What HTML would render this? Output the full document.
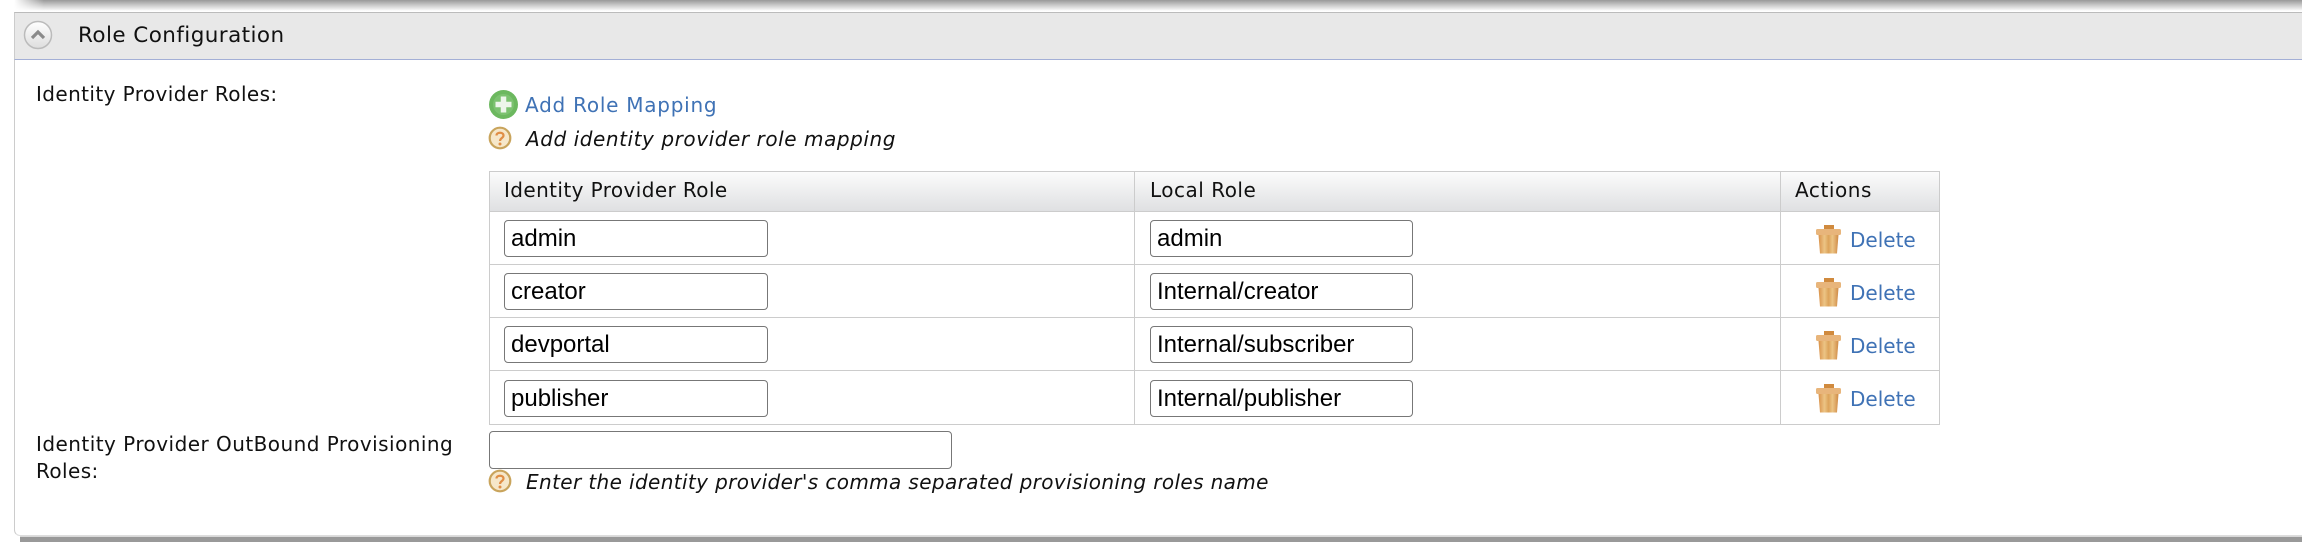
<!DOCTYPE html>
<html><head><meta charset="utf-8"><style>
html,body{margin:0;padding:0;width:2302px;height:542px;overflow:hidden;background:#fff}
.a{position:absolute;white-space:nowrap}
.t{font-family:"DejaVu Sans",sans-serif;font-size:20px;line-height:24px;color:#111;letter-spacing:.4px}
.l{color:#3f72b5;letter-spacing:.75px}
.d{letter-spacing:0}
.i{font-style:italic}
.inp{position:absolute;box-sizing:border-box;width:264px;height:37px;border:1.5px solid #777;border-radius:4px;background:#fff;font-family:"Liberation Sans",sans-serif;font-size:24px;line-height:36px;padding-left:6px;color:#000}
.ln{position:absolute;background:#ccc}
svg{position:absolute}
</style></head><body>
<div class="a" style="left:14px;top:0;width:2288px;height:11px;background:linear-gradient(#999,#c8c8c8 45%,#fff);-webkit-mask-image:linear-gradient(90deg,transparent,#000 30px)"></div>
<div class="a" style="left:20px;top:536px;width:2282px;height:6px;background:#999;border-top:1px solid #d8d8d8;box-sizing:border-box"></div>
<div class="a" style="left:14px;top:12px;width:2288px;height:524px;box-sizing:border-box;border-left:1.5px solid #ccc;border-bottom:1px solid #ddd;border-bottom-left-radius:6px;background:#fff"></div>
<div class="a" style="left:14px;top:12px;width:2288px;height:48px;box-sizing:border-box;background:#e8e8e8;border-top:1.5px solid #bbb;border-left:1.5px solid #ccc;border-bottom:1.5px solid #a3afd6"></div>
<svg style="left:23px;top:20px" width="30" height="30" viewBox="0 0 30 30"><defs><linearGradient id="g0" x1="0" y1="0" x2="0" y2="1"><stop offset="0" stop-color="#fff"/><stop offset="1" stop-color="#ddd"/></linearGradient></defs><circle cx="15" cy="15" r="13.5" fill="url(#g0)" stroke="#bbb" stroke-width="1.5"/><path d="M9 18 L15 12 L21 18" fill="none" stroke="#8a8a8a" stroke-width="3.2"/></svg>
<div class="a t" style="left:78px;top:24px;font-size:21.5px;letter-spacing:.42px">Role Configuration</div>
<div class="a t" style="left:36px;top:82px">Identity Provider Roles:</div>
<svg style="left:488px;top:89px" width="31" height="31" viewBox="0 0 31 31"><circle cx="15.5" cy="15.5" r="14.5" fill="#6cb85f"/><circle cx="15.5" cy="15.5" r="10.5" fill="#7cc270"/><path d="M15.5 7.5V23.5M7.5 15.5H23.5" stroke="#edf6ea" stroke-width="5.5"/></svg>
<div class="a t l" style="left:525px;top:93px">Add Role Mapping</div>
<svg style="left:488px;top:126px" width="24" height="24" viewBox="0 0 24 24"><circle cx="12" cy="12" r="10.3" fill="#f6e7c9" stroke="#c9a45c" stroke-width="2.2"/><path d="M8.5 9.5C8.5 5.8 15.5 5.8 15.5 9.5C15.5 12 12 12 12 15" fill="none" stroke="#e08e45" stroke-width="2.2"/><circle cx="12" cy="18" r="1.5" fill="#e08e45"/></svg>
<div class="a t i" style="left:526px;top:127px;letter-spacing:.56px">Add identity provider role mapping</div>
<div class="a" style="left:489px;top:171px;width:1451px;height:40px;background:linear-gradient(#fcfcfc,#dfe0e2)"></div>
<div class="ln" style="left:489px;top:171px;width:1451px;height:1px"></div>
<div class="ln" style="left:489px;top:211px;width:1451px;height:1px"></div>
<div class="ln" style="left:489px;top:264px;width:1451px;height:1px"></div>
<div class="ln" style="left:489px;top:317px;width:1451px;height:1px"></div>
<div class="ln" style="left:489px;top:370px;width:1451px;height:1px"></div>
<div class="ln" style="left:489px;top:424px;width:1451px;height:1px"></div>
<div class="ln" style="left:489px;top:171px;width:1px;height:254px"></div>
<div class="ln" style="left:1134px;top:171px;width:1px;height:254px"></div>
<div class="ln" style="left:1780px;top:171px;width:1px;height:254px"></div>
<div class="ln" style="left:1939px;top:171px;width:1px;height:254px"></div>
<div class="a t" style="left:504px;top:178px;letter-spacing:.4px">Identity Provider Role</div>
<div class="a t" style="left:1150px;top:178px;letter-spacing:.5px">Local Role</div>
<div class="a t" style="left:1795px;top:178px;letter-spacing:.57px">Actions</div>
<div class="inp" style="left:504px;top:220px">admin</div>
<div class="inp" style="left:504px;top:273px">creator</div>
<div class="inp" style="left:504px;top:326px">devportal</div>
<div class="inp" style="left:504px;top:380px">publisher</div>
<div class="inp" style="left:1150px;top:220px;width:263px">admin</div>
<div class="inp" style="left:1150px;top:273px;width:263px">Internal/creator</div>
<div class="inp" style="left:1150px;top:326px;width:263px">Internal/subscriber</div>
<div class="inp" style="left:1150px;top:380px;width:263px">Internal/publisher</div>
<svg width="0" height="0"><defs><linearGradient id="tb" x1="0" y1="0" x2="1" y2="0"><stop offset="0" stop-color="#d9924a"/><stop offset=".3" stop-color="#ecc485"/><stop offset=".5" stop-color="#dca35a"/><stop offset=".7" stop-color="#ecc485"/><stop offset="1" stop-color="#cf8a45"/></linearGradient><g id="trash"><rect x="8" y="0" width="10" height="5" fill="#d08a3e"/><rect x="0" y="4" width="25" height="6" rx="1.5" fill="#e8b57b"/><path d="M2.5 10H22.5L21 28.5H4Z" fill="url(#tb)"/></g></defs></svg>
<svg style="left:1816px;top:225px" width="25" height="29"><use href="#trash"/></svg>
<svg style="left:1816px;top:278px" width="25" height="29"><use href="#trash"/></svg>
<svg style="left:1816px;top:331px" width="25" height="29"><use href="#trash"/></svg>
<svg style="left:1816px;top:384px" width="25" height="29"><use href="#trash"/></svg>
<div class="a t l d" style="left:1850px;top:228px">Delete</div>
<div class="a t l d" style="left:1850px;top:281px">Delete</div>
<div class="a t l d" style="left:1850px;top:334px">Delete</div>
<div class="a t l d" style="left:1850px;top:387px">Delete</div>
<div class="a t" style="left:36px;top:432px;letter-spacing:.46px">Identity Provider OutBound Provisioning</div>
<div class="a t" style="left:36px;top:459px">Roles:</div>
<div class="inp" style="left:489px;top:431px;width:463px;height:38px"></div>
<svg style="left:488px;top:469px" width="24" height="24" viewBox="0 0 24 24"><circle cx="12" cy="12" r="10.3" fill="#f6e7c9" stroke="#c9a45c" stroke-width="2.2"/><path d="M8.5 9.5C8.5 5.8 15.5 5.8 15.5 9.5C15.5 12 12 12 12 15" fill="none" stroke="#e08e45" stroke-width="2.2"/><circle cx="12" cy="18" r="1.5" fill="#e08e45"/></svg>
<div class="a t i" style="left:526px;top:470px;letter-spacing:.38px">Enter the identity provider's comma separated provisioning roles name</div>
</body></html>
